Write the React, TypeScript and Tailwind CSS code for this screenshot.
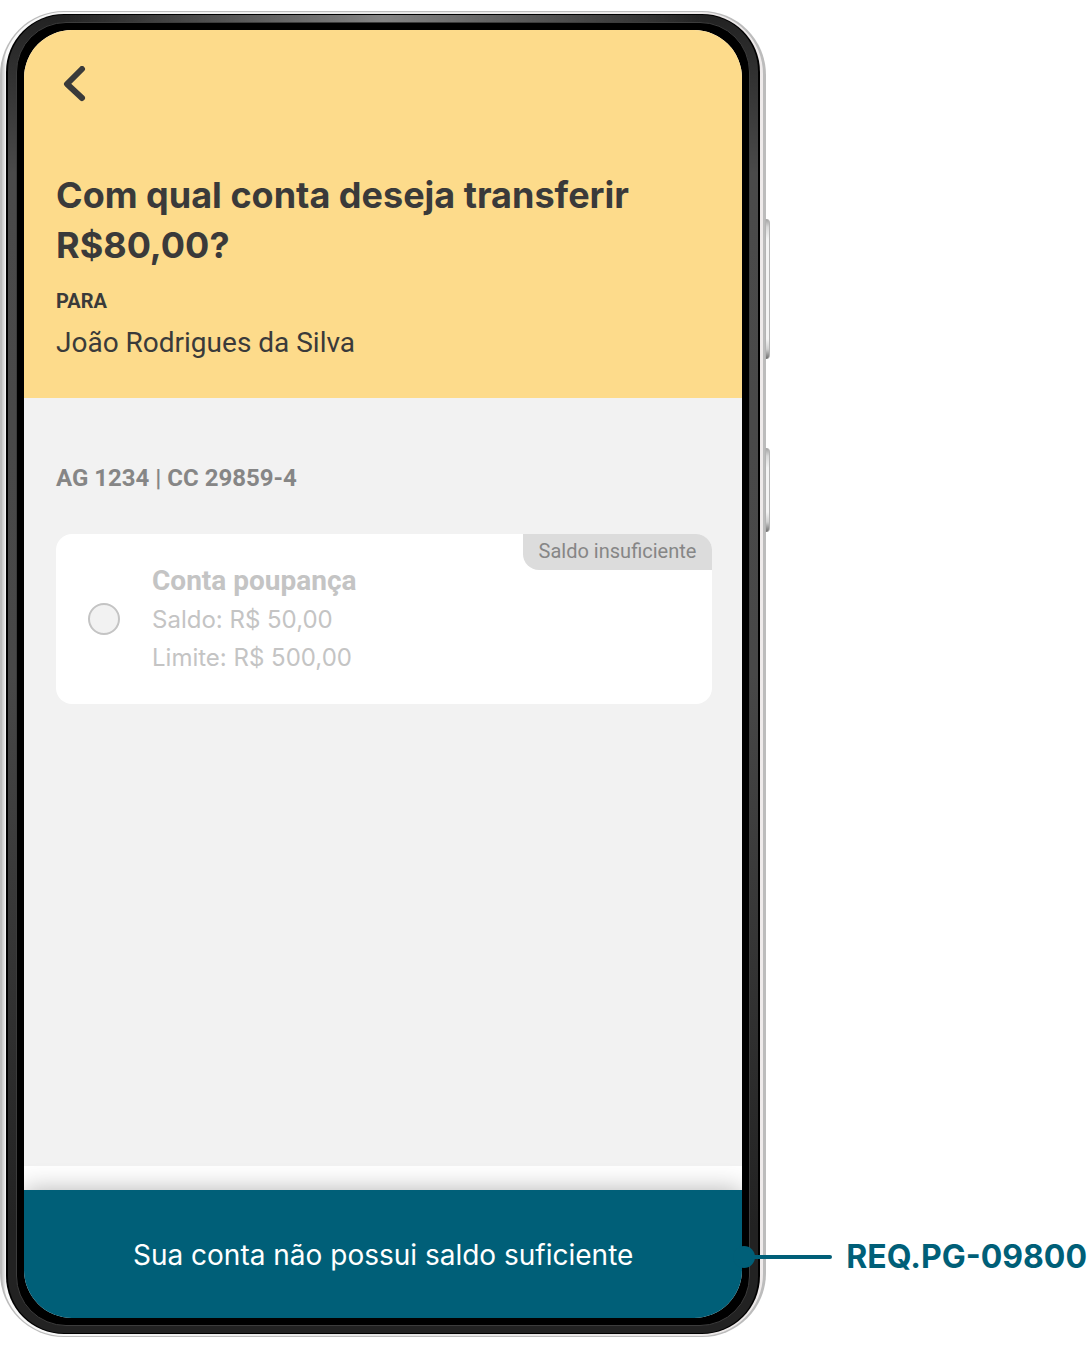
import { useState } from "react";

interface Account {
    id: string;
    name: string;
    balance: string;
    limit: string;
    insufficient: boolean;
}

const accounts: Account[] = [
    { id: "poupanca", name: "Conta poupança", balance: "R$ 50,00", limit: "R$ 500,00", insufficient: true },
];

function AccountOption({ account, selected, onSelect }: { account: Account; selected: boolean; onSelect: () => void }) {
    return (
        <label className="relative flex items-center gap-8 overflow-hidden rounded-2xl bg-white px-8 py-[27px]">
            <input
                type="radio"
                name="account"
                checked={selected}
                onChange={onSelect}
                disabled={account.insufficient}
                className="size-8 shrink-0 appearance-none rounded-full border-2 border-[#c4c4c4] bg-[#f2f2f2] checked:bg-[#005f78]"
            />
            <span className="flex flex-col text-2xl leading-[38px] text-[#c4c4c4]">
                <span className="font-[Roboto,sans-serif] text-[28px] leading-10 font-bold">{account.name}</span>
                <span>Saldo: {account.balance}</span>
                <span>Limite: {account.limit}</span>
            </span>
            {account.insufficient && (
                <span className="absolute top-0 right-0 rounded-bl-2xl bg-[#dcdcdc] px-4 pb-[2px] font-[Roboto,sans-serif] text-xl leading-[34px] text-[#868686]">
                    Saldo insuficiente
                </span>
            )}
        </label>
    );
}

function SideButton({ className }: { className: string }) {
    return (
        <div className={`absolute left-full -ml-px w-[5px] rounded-r-sm border-x border-[#b4b4b4] bg-[linear-gradient(#a0a0a0,#d8d8d8_8px,#f4f4f4_20px,#f4f4f4_calc(100%-20px),#d0d0d0_calc(100%-10px),#6a6a6a)] ${className}`} />
    );
}

export default function App() {
    const [selected, setSelected] = useState<string | null>(null);

    return (
        <main className="flex min-h-screen items-stretch bg-white pt-[11px] pb-[11px] font-[Inter,sans-serif]">
            {/* Phone body */}
            <div className="relative flex min-w-0 flex-1 flex-col rounded-[64px] bg-[#bcbcbc] py-px pr-[3px] pl-[2px]">
                <SideButton className="top-[208px] h-[140px]" />
                <SideButton className="top-[437px] h-[84px]" />
                <div className="flex flex-1 flex-col rounded-[62px] bg-[linear-gradient(to_right,#c8c8c8,#dcdcdc_2px,#fafafa_4px,#e6e6e6_50%,#eeeaea)] py-[2px] pr-[3px] pl-1">
                    <div className="flex flex-1 flex-col rounded-[58px] bg-black px-[2px] py-px">
                        <div className="flex flex-1 flex-col rounded-[56px] bg-[radial-gradient(circle_320px_at_top,#858585,transparent),linear-gradient(#222222,#4a4a4a_12%,#484848_50%,#222222_92%)] px-2 py-[7px]">
                            <div className="flex flex-1 flex-col rounded-[50px] border border-[#3c3c3c] bg-black p-[7px]">
                                <div className="flex flex-1 flex-col overflow-hidden rounded-[48px] bg-white">
                                    <header className="bg-[#fddb8b] px-8 pt-9 pb-[34px] text-[#3a3a3a]">
                                        <button type="button" aria-label="Voltar" className="block">
                                            <svg width="36" height="36" viewBox="0 0 36 36" fill="none">
                                                <path d="M26 3 11 18l15 14" stroke="currentColor" strokeWidth="6" strokeLinecap="round" strokeLinejoin="round" />
                                            </svg>
                                        </button>
                                        <h1 className="mt-[68px] text-4xl leading-[50px] font-bold">
                                            Com qual conta deseja transferir R$80,00?
                                        </h1>
                                        <p className="mt-4 font-[Roboto,sans-serif] text-xl leading-[30px] font-bold">PARA</p>
                                        <p className="mt-[6px] font-[Roboto,sans-serif] text-[28px] leading-[42px]">João Rodrigues da Silva</p>
                                    </header>

                                    <section className="flex-1 bg-[#f2f2f2] pt-16 pr-[30px] pl-8">
                                        <h2 className="mb-10 font-[Roboto,sans-serif] text-2xl font-bold text-[#868686]">
                                            AG 1234 | CC 29859-4
                                        </h2>
                                        {accounts.map(account => (
                                            <AccountOption
                                                key={account.id}
                                                account={account}
                                                selected={selected === account.id}
                                                onSelect={() => setSelected(account.id)}
                                            />
                                        ))}
                                    </section>

                                    <footer role="status" className="mt-6 bg-[#005f78] px-8 pt-[45px] pb-[43px] text-center text-[28px] leading-10 text-white shadow-[0_0_24px_rgba(0,0,0,0.3)]">
                                        Sua conta não possui saldo suficiente
                                    </footer>
                                </div>
                            </div>
                        </div>
                    </div>
                </div>
            </div>

            {/* Requirement callout */}
            <aside className="z-10 -ml-[33px] flex shrink-0 items-center self-end pb-14 text-[#005f78]">
                <span className="size-[22px] rounded-full bg-[#005f78]" />
                <span className="-ml-1 h-1 w-[81px] rounded-full bg-[#005f78]" />
                <strong className="ml-[14px] pr-[3px] text-[32px] leading-[48px] font-bold">REQ.PG-09800</strong>
            </aside>
        </main>
    );
}
